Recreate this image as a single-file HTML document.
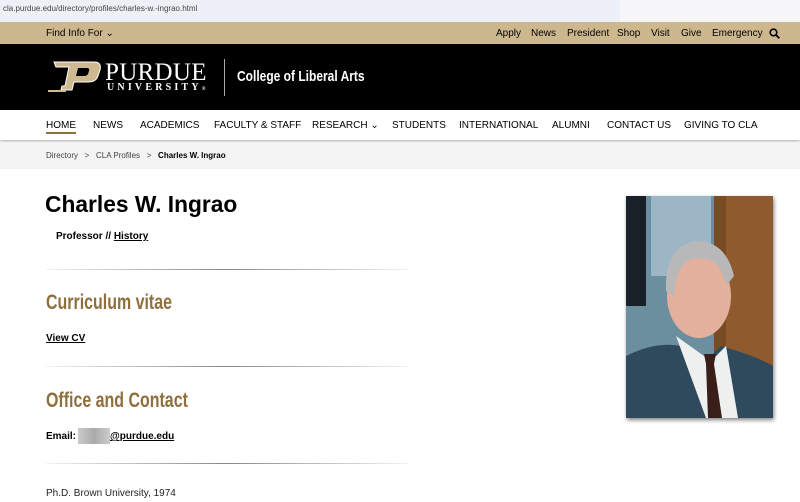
<!DOCTYPE html>
<html><head><meta charset="utf-8"><style>
*{margin:0;padding:0;box-sizing:border-box}
body{width:800px;height:502px;overflow:hidden;background:#fff;font-family:"Liberation Sans",sans-serif;color:#000;position:relative}
.a{position:absolute;white-space:nowrap}
.hr{position:absolute;left:46px;width:362px;height:1px;background:linear-gradient(90deg,rgba(0,0,0,0.05),#888 50%,rgba(0,0,0,0.05))}
.h2{font-weight:bold;color:#8e6f3e;font-size:21px;transform:scaleX(0.76);transform-origin:0 0}
.n{font-size:10px;top:120px}
</style></head><body>
<div class="a" style="left:0;top:0;width:800px;height:22px;background:#eef0f7"></div>
<div class="a" style="left:620px;top:0;width:180px;height:22px;background:#f6f6f8"></div>
<div class="a" style="left:3px;top:4px;font-size:8px;color:#444">cla.purdue.edu/directory/profiles/charles-w.-ingrao.html</div>
<div class="a" style="left:0;top:22px;width:800px;height:22px;background:#cdb78e"></div>
<div class="a" style="left:46px;top:28px;font-size:10px">Find Info For &#8964;</div>
<div class="a" style="left:496px;top:28px;font-size:10px">Apply</div>
<div class="a" style="left:531px;top:28px;font-size:10px">News</div>
<div class="a" style="left:567px;top:28px;font-size:10px">President</div>
<div class="a" style="left:617px;top:28px;font-size:10px">Shop</div>
<div class="a" style="left:651px;top:28px;font-size:10px">Visit</div>
<div class="a" style="left:681px;top:28px;font-size:10px">Give</div>
<div class="a" style="left:712px;top:28px;font-size:10px">Emergency</div>
<svg class="a" style="left:769px;top:28px" width="11" height="11" viewBox="0 0 11 11"><circle cx="4.5" cy="4.5" r="3.3" fill="none" stroke="#000" stroke-width="1.6"/><path d="M7 7L10.3 10.3" stroke="#000" stroke-width="1.8"/></svg>
<div class="a" style="left:0;top:44px;width:800px;height:66px;background:#000"></div>
<svg class="a" style="left:46px;top:61px" width="56" height="31" viewBox="0 0 56 31"><path d="M8 1H48Q56 1 54 9L52 15Q50 21 42 21H28L26 29H15L16 25H19L23 6H10Z" fill="#cfb991" stroke="#fff" stroke-width="1"/><path d="M2 30H20" stroke="#cfb991" stroke-width="2"/><path d="M32 7H41Q44 7 43 10L42 13Q41 15 38 15H30Z" fill="#000"/></svg>
<div class="a" style="left:105px;top:59px;font-family:'Liberation Serif',serif;font-size:25px;color:#fff;letter-spacing:0.3px">PURDUE</div>
<div class="a" style="left:107px;top:82px;font-family:'Liberation Serif',serif;font-size:10px;color:#fff;letter-spacing:3.2px;font-weight:bold">UNIVERSITY<span style="font-size:5px;letter-spacing:0">®</span></div>
<div class="a" style="left:224px;top:59px;width:1px;height:37px;background:#aaa"></div>
<div class="a" style="left:237px;top:68px;font-weight:bold;color:#fff;font-size:15px;transform:scaleX(0.8);transform-origin:0 0">College of Liberal Arts</div>
<div class="a" style="left:0;top:110px;width:800px;height:30px;background:#fff;box-shadow:0 2px 3px rgba(0,0,0,0.25)"></div>
<div class="a n" style="left:46px;border-bottom:2px solid #8e6f3e;line-height:12px">HOME</div>
<div class="a n" style="left:93px">NEWS</div>
<div class="a n" style="left:140px">ACADEMICS</div>
<div class="a n" style="left:214px">FACULTY &amp; STAFF</div>
<div class="a n" style="left:312px">RESEARCH &#8964;</div>
<div class="a n" style="left:392px">STUDENTS</div>
<div class="a n" style="left:459px">INTERNATIONAL</div>
<div class="a n" style="left:552px">ALUMNI</div>
<div class="a n" style="left:607px">CONTACT US</div>
<div class="a n" style="left:684px">GIVING TO CLA</div>
<div class="a" style="left:0;top:142px;width:800px;height:27px;background:#f3f3f3"></div>
<div class="a" style="left:46px;top:151px;font-size:8px;color:#444">Directory &nbsp;&nbsp;&gt;&nbsp;&nbsp; CLA Profiles &nbsp;&nbsp;&gt;&nbsp;&nbsp; <b style="color:#000">Charles W. Ingrao</b></div>
<div class="a" style="left:45px;top:191px;font-size:23px;font-weight:bold;transform:scaleX(0.99);transform-origin:0 0">Charles W. Ingrao</div>
<div class="a" style="left:56px;top:231px;font-size:10px;font-weight:bold">Professor // <u>History</u></div>
<div class="hr" style="top:269px"></div>
<div class="a h2" style="left:46px;top:291px">Curriculum vitae</div>
<div class="a" style="left:46px;top:333px;font-size:10px;font-weight:bold;text-decoration:underline">View CV</div>
<div class="hr" style="top:366px"></div>
<div class="a h2" style="left:46px;top:389px">Office and Contact</div>
<div class="a" style="left:46px;top:431px;font-size:10px;font-weight:bold">Email:</div>
<div class="a" style="left:78px;top:428px;width:32px;height:16px;background:linear-gradient(90deg,#ccc,#aaa,#ccc)"></div>
<div class="a" style="left:110px;top:431px;font-size:10px;font-weight:bold;text-decoration:underline">@purdue.edu</div>
<div class="hr" style="top:463px"></div>
<div class="a" style="left:46px;top:488px;font-size:10px;color:#222">Ph.D. Brown University, 1974</div>
<svg class="a" style="left:626px;top:196px;box-shadow:1px 2px 4px rgba(0,0,0,0.5)" width="147" height="222" viewBox="0 0 147 222">
<rect width="147" height="222" fill="#6c8fa0"/>
<rect x="0" y="0" width="20" height="110" fill="#1a2028"/>
<rect x="25" y="0" width="60" height="80" fill="#9db6c6"/>
<rect x="88" y="0" width="59" height="222" fill="#7a4a22"/>
<rect x="100" y="0" width="47" height="222" fill="#8e5a2e"/>
<path d="M0 160Q30 145 55 150L75 170L95 150Q130 160 147 170V222H0Z" fill="#2e4a5c"/>
<path d="M50 140L80 222H112L100 150L85 165Z" fill="#eef0f0"/>
<path d="M78 158L90 158L88 168L96 222H82L80 168Z" fill="#3a1e1a"/>
<ellipse cx="73" cy="100" rx="32" ry="42" fill="#e2b09c"/>
<path d="M40 95Q38 50 70 45Q100 45 108 80L100 90Q95 60 70 62Q50 65 48 100Z" fill="#b8b8b8"/>
</svg>
</body></html>
